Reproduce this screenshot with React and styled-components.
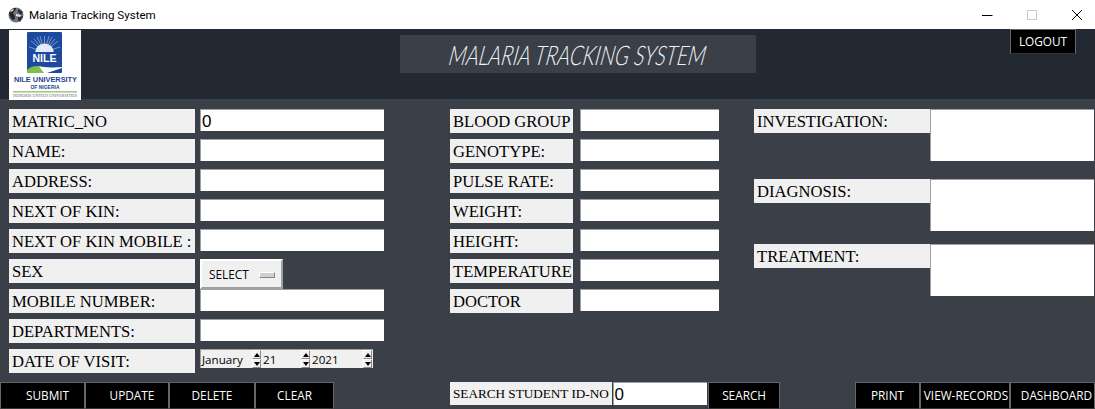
import styled, { createGlobalStyle } from 'styled-components'

const GlobalStyle = createGlobalStyle`
	html, body {
		margin: 0;
		padding: 0;
		background: #3b3f48;
		overflow: hidden;
	}
	* {
		box-sizing: border-box;
	}
`

const Page = styled.div`
	display: flex;
	flex-direction: column;
	width: 1095px;
	height: 409px;
	background-color: #3b3f48;
`

const TitleBar = styled.div`
	display: flex;
	align-items: center;
	height: 29px;
	padding-left: 8px;
	background-color: #fff;
	overflow: hidden;
	font: 11.6px 'Roboto', sans-serif;
	color: #000;
`

const GlobeIcon = styled.svg`
	flex: none;
	width: 16px;
	height: 16px;
`

const WindowName = styled.span`
	flex: none;
	width: 935px;
	margin-left: 5px;
`

const WindowButton = styled.div`
	display: flex;
	flex: none;
	align-items: center;
	justify-content: center;
	width: 45px;
	height: 29px;
`

const Header = styled.div`
	display: flex;
	align-items: flex-start;
	height: 70px;
	padding-left: 9px;
	background-color: #222933;
`

const Logo = styled.div`
	width: 72px;
	height: 70px;
	margin-top: 1px;
	background-color: #fff;
`

const Banner = styled.div`
	display: flex;
	align-items: center;
	justify-content: center;
	width: 356px;
	height: 38px;
	margin: 6px 254px 0 319px;
	background-color: #3b3f48;
	color: #eef3f6;
	font: italic 300 27px 'Lato', sans-serif;
	white-space: nowrap;
`

const BannerText = styled.span`
	display: inline-block;
	transform: scaleX(0.77) skewX(-12deg);
`

const BlackButton = styled.div`
	display: flex;
	align-items: center;
	justify-content: center;
	width: ${(p) => p.$width}px;
	height: ${(p) => p.$height || 27}px;
	padding: 0 0 2px ${(p) => p.$shift || 0}px;
	background-color: #000;
	border: 1px solid #666;
	border-bottom-color: #333;
	color: #fff;
	font: 11.8px 'Open Sans', sans-serif;
	white-space: nowrap;
`

const Form = styled.div`
	display: flex;
	height: 283px;
	padding: 10px 0 0 9px;
`

const LeftColumn = styled.div`
	width: 375px;
`

const MiddleColumn = styled.div`
	width: 269px;
	margin-left: 66px;
`

const RightColumn = styled.div`
	width: 340px;
	margin-left: 35px;
`

const Row = styled.div`
	display: flex;
	align-items: flex-start;
	height: 30px;
	gap: ${(p) => p.$gap}px;
`

const Label = styled.div`
	flex: none;
	width: ${(p) => p.$width}px;
	height: 24px;
	padding: 1px 0 0 3px;
	background-color: #f0f0f0;
	color: #000;
	font: 16.6px/24px 'Liberation Serif', serif;
	white-space: nowrap;
	overflow: hidden;
`

const Field = styled.div`
	flex: none;
	width: ${(p) => p.$width}px;
	height: 22px;
	padding-left: 1px;
	background-color: #fff;
	border-top: 1px solid #a0a0a0;
	border-left: 1px solid #a0a0a0;
	color: #000;
	font: 17px/23px 'Liberation Sans', sans-serif;
`

const NotesRow = styled.div`
	display: flex;
	align-items: flex-start;
	height: 52px;
	margin-bottom: ${(p) => p.$after}px;
`

const NotesField = styled.div`
	flex: none;
	width: 164px;
	height: 52px;
	background-color: #fff;
	border-top: 1px solid #a0a0a0;
	border-left: 1px solid #a0a0a0;
`

const Select = styled.div`
	display: flex;
	align-items: center;
	width: 83px;
	height: 30px;
	padding-left: 7px;
	background-color: #f0f0f0;
	border: 2px solid;
	border-color: #fff #a0a0a0 #a0a0a0 #fff;
	box-shadow: inset 0 0 0 1px #f0f0f0;
	color: #000;
	font: 11.8px 'Open Sans', sans-serif;
`

const SelectMark = styled.span`
	width: 16px;
	height: 6px;
	margin: 1px 0 0 10px;
	background-color: #cfcfcf;
	border: 1px solid;
	border-color: #fff #888 #888 #fff;
`

const DateField = styled.div`
	display: flex;
	width: 173px;
	height: 19px;
	background-color: #f0f0f0;
	border-top: 1px solid #a0a0a0;
	border-left: 1px solid #a0a0a0;
`

const Spin = styled.div`
	display: flex;
	align-items: center;
	justify-content: space-between;
	width: ${(p) => p.$width}px;
	padding-left: 1px;
	color: #000;
	font: 11.6px 'Open Sans', sans-serif;
`

const SpinArrows = styled.div`
	display: flex;
	flex-direction: column;
	width: 9px;
	height: 18px;
	margin-right: 1px;
	background-color: #f0f0f0;
	font-size: 0;
`

const SpinArrow = styled.span`
	display: flex;
	align-items: center;
	justify-content: center;
	flex: 1;
	border: 1px solid;
	border-color: #fff #888 #888 #fff;
	&::after {
		content: '';
		border-left: 3.5px solid transparent;
		border-right: 3.5px solid transparent;
		border-${(p) => (p.$down ? 'top' : 'bottom')}: 4px solid #000;
	}
`

const Footer = styled.div`
	display: flex;
	align-items: flex-start;
	height: 27px;
`

const ButtonGroup = styled.div`
	display: flex;
	margin-left: ${(p) => p.$left || 0}px;
`

const SearchLabel = styled.div`
	width: 162px;
	height: 23px;
	margin-left: 116px;
	padding-left: 3px;
	background-color: #f0f0f0;
	color: #000;
	font: 13.2px/23px 'Liberation Serif', serif;
	white-space: nowrap;
	overflow: hidden;
`

const SearchField = styled.div`
	width: 95px;
	height: 23px;
	margin: 0 1px;
	padding-left: 1px;
	background-color: #fff;
	border-top: 1px solid #a0a0a0;
	border-left: 1px solid #a0a0a0;
	color: #000;
	font: 17px/23px 'Liberation Sans', sans-serif;
`

const Globe = () => (
	<GlobeIcon viewBox="0 0 16 16">
		<circle cx="8" cy="8" r="7.5" fill="#70757c" />
		<path d="M1 6 C3 2 6 1 8 1 C8 4 6 4 5 6 C6 8 7 8 7 11 C6 14 4 13 3 11 C2 9 1 8 1 6Z" fill="#23262c" />
		<path d="M10 2 L15 5 L13 8 L10 5Z M10 10 L15 9 L12 15 L10 13Z" fill="#2b2e34" />
		<path d="M2 4 L5 2 L6 3 L3 5Z M8 7 L13 8 L12 10 L8 9Z" fill="#e4e6ea" />
	</GlobeIcon>
)

const UniversityLogo = () => (
	<svg width="72" height="70" viewBox="0 0 72 70">
		<rect x="18" y="2" width="35" height="41" rx="1" fill="#1c4a9e" />
		<g stroke="#b9c9e6" strokeWidth="0.6">
			<path d="M35.5 22 L35.5 6 M35.5 22 L28 7 M35.5 22 L43 7 M35.5 22 L22 11 M35.5 22 L49 11 M35.5 22 L20 17 M35.5 22 L51 17 M35.5 22 L31 6 M35.5 22 L40 6 M35.5 22 L25 9 M35.5 22 L46 9" />
		</g>
		<path d="M26 23 A9.5 9.5 0 0 1 45 23Z" fill="#e3eaf5" />
		<rect x="22" y="22" width="27" height="11" fill="#1c4a9e" />
		<text x="35.5" y="32" textAnchor="middle" fill="#fff" fontFamily="Liberation Sans" fontWeight="700" fontSize="11.5" textLength="24" lengthAdjust="spacingAndGlyphs">NILE</text>
		<path d="M18 43 L18 40 C22 36 28 35 34 37 L37 43Z" fill="#7cc04a" />
		<path d="M30 36.5 C34 37 40 38 53 37 L53 38 L38 43 L35 43Z" fill="#fff" />
		<text x="36.5" y="52" textAnchor="middle" fill="#1c3f8f" fontFamily="Liberation Sans" fontWeight="700" fontSize="7.5" textLength="63" lengthAdjust="spacingAndGlyphs">NILE UNIVERSITY</text>
		<text x="36" y="59" textAnchor="middle" fill="#1c3f8f" fontFamily="Liberation Sans" fontWeight="700" fontSize="5" textLength="29" lengthAdjust="spacingAndGlyphs">OF NIGERIA</text>
		<rect x="4" y="61" width="64" height="1.6" fill="#a5cc86" />
		<text x="36" y="67" textAnchor="middle" fill="#666" fontFamily="Liberation Serif" fontSize="3" textLength="64" lengthAdjust="spacingAndGlyphs">HONORIS UNITED UNIVERSITIES</text>
	</svg>
)

const leftRows = [
	['MATRIC_NO', '0'],
	['NAME:'],
	['ADDRESS:'],
	['NEXT OF KIN:'],
	['NEXT OF KIN MOBILE :'],
]

const leftRowsAfter = ['MOBILE NUMBER:', 'DEPARTMENTS:']

const middleRows = ['BLOOD GROUP', 'GENOTYPE:', 'PULSE RATE:', 'WEIGHT:', 'HEIGHT:', 'TEMPERATURE', 'DOCTOR']

const notes = [
	['INVESTIGATION:', 18],
	['DIAGNOSIS:', 13],
	['TREATMENT:', 0],
]

const dateParts = [
	['January', 61],
	['21', 49],
	['2021', 62],
]

export default function App() {
	return (
		<Page>
			<GlobalStyle />
			<TitleBar>
				<Globe />
				<WindowName>Malaria Tracking System</WindowName>
				<WindowButton>
					<svg width="12" height="12" viewBox="0 0 12 12"><path d="M1 6.5H11.5" stroke="#000" /></svg>
				</WindowButton>
				<WindowButton>
					<svg width="12" height="12" viewBox="0 0 12 12"><rect x="1.5" y="1.5" width="9" height="9" fill="none" stroke="#ccc" /></svg>
				</WindowButton>
				<WindowButton>
					<svg width="12" height="12" viewBox="0 0 12 12"><path d="M1 1L11 11M11 1L1 11" stroke="#000" /></svg>
				</WindowButton>
			</TitleBar>
			<Header>
				<Logo><UniversityLogo /></Logo>
				<Banner><BannerText>MALARIA TRACKING SYSTEM</BannerText></Banner>
				<BlackButton $width={66} $height={25}>LOGOUT</BlackButton>
			</Header>
			<Form>
				<LeftColumn>
					{leftRows.map(([name, value]) => (
						<Row key={name} $gap={5}>
							<Label $width={186}>{name}</Label>
							<Field $width={184}>{value}</Field>
						</Row>
					))}
					<Row $gap={5}>
						<Label $width={186}>SEX</Label>
						<Select>SELECT<SelectMark /></Select>
					</Row>
					{leftRowsAfter.map((name) => (
						<Row key={name} $gap={5}>
							<Label $width={186}>{name}</Label>
							<Field $width={184} />
						</Row>
					))}
					<Row $gap={5}>
						<Label $width={186}>DATE OF VISIT:</Label>
						<DateField>
							{dateParts.map(([text, width]) => (
								<Spin key={text} $width={width}>
									{text}
									<SpinArrows>
										<SpinArrow />
										<SpinArrow $down />
									</SpinArrows>
								</Spin>
							))}
						</DateField>
					</Row>
				</LeftColumn>
				<MiddleColumn>
					{middleRows.map((name) => (
						<Row key={name} $gap={7}>
							<Label $width={123}>{name}</Label>
							<Field $width={139} />
						</Row>
					))}
				</MiddleColumn>
				<RightColumn>
					{notes.map(([name, after]) => (
						<NotesRow key={name} $after={after}>
							<Label $width={176}>{name}</Label>
							<NotesField />
						</NotesRow>
					))}
				</RightColumn>
			</Form>
			<Footer>
				<ButtonGroup>
					<BlackButton $width={85} $shift={10}>SUBMIT</BlackButton>
					<BlackButton $width={84} $shift={10}>UPDATE</BlackButton>
					<BlackButton $width={86}>DELETE</BlackButton>
					<BlackButton $width={79}>CLEAR</BlackButton>
				</ButtonGroup>
				<SearchLabel>SEARCH STUDENT ID-NO</SearchLabel>
				<SearchField>0</SearchField>
				<BlackButton $width={72}>SEARCH</BlackButton>
				<ButtonGroup $left={75}>
					<BlackButton $width={65}>PRINT</BlackButton>
					<BlackButton $width={90} $shift={2}>VIEW-RECORDS</BlackButton>
					<BlackButton $width={85} $shift={8}>DASHBOARD</BlackButton>
				</ButtonGroup>
			</Footer>
		</Page>
	)
}
